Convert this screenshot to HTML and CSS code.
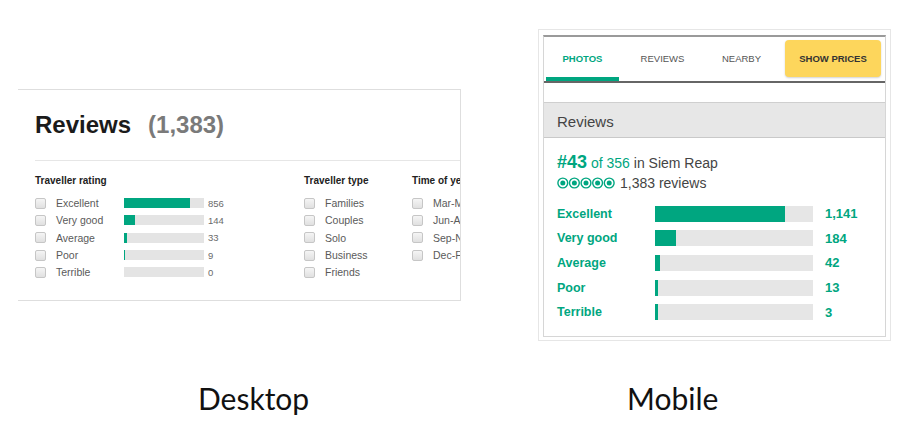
FILE: index.html
```html
<!DOCTYPE html>
<html lang="en">

<head>
    <meta charset="UTF-8" />
    <meta name="viewport" content="width=device-width, initial-scale=1.0" />
    <title>Reviews - Desktop vs Mobile</title>
    <link rel="stylesheet" href="styles.css">
</head>

<body>
    <div class="stage">
        <!-- Desktop reviews panel -->
        <section class="desk">
            <div class="desk-head">
                <h1 class="desk-title">Reviews</h1>
                <span class="desk-total">(1,383)</span>
            </div>
            <div class="desk-filters">
                <div class="filter filter-rating">
                    <h3 class="filter-title">Traveller rating</h3>
                    <ul class="filter-list">
                        <li class="filter-row"><span class="box"></span><span class="filter-label">Excellent</span><span class="d-bar"><span class="d-fill" style="width:82.1%"></span></span><span class="d-count">856</span></li>
                        <li class="filter-row"><span class="box"></span><span class="filter-label">Very good</span><span class="d-bar"><span class="d-fill" style="width:13.8%"></span></span><span class="d-count">144</span></li>
                        <li class="filter-row"><span class="box"></span><span class="filter-label">Average</span><span class="d-bar"><span class="d-fill" style="width:3.2%"></span></span><span class="d-count">33</span></li>
                        <li class="filter-row"><span class="box"></span><span class="filter-label">Poor</span><span class="d-bar"><span class="d-fill" style="width:0.4%"></span></span><span class="d-count">9</span></li>
                        <li class="filter-row"><span class="box"></span><span class="filter-label">Terrible</span><span class="d-bar"><span class="d-fill" style="width:0"></span></span><span class="d-count">0</span></li>
                    </ul>
                </div>
                <div class="filter filter-type">
                    <h3 class="filter-title">Traveller type</h3>
                    <ul class="filter-list">
                        <li class="filter-row"><span class="box"></span><span class="filter-label">Families</span></li>
                        <li class="filter-row"><span class="box"></span><span class="filter-label">Couples</span></li>
                        <li class="filter-row"><span class="box"></span><span class="filter-label">Solo</span></li>
                        <li class="filter-row"><span class="box"></span><span class="filter-label">Business</span></li>
                        <li class="filter-row"><span class="box"></span><span class="filter-label">Friends</span></li>
                    </ul>
                </div>
                <!-- this column runs past the panel edge and gets clipped -->
                <div class="filter filter-time">
                    <h3 class="filter-title">Time of year</h3>
                    <ul class="filter-list">
                        <li class="filter-row"><span class="box"></span><span class="filter-label">Mar-May</span></li>
                        <li class="filter-row"><span class="box"></span><span class="filter-label">Jun-Aug</span></li>
                        <li class="filter-row"><span class="box"></span><span class="filter-label">Sep-Nov</span></li>
                        <li class="filter-row"><span class="box"></span><span class="filter-label">Dec-Feb</span></li>
                    </ul>
                </div>
            </div>
        </section>

        <!-- Mobile reviews screen -->
        <section class="phone">
            <div class="phone-inner">
                <nav class="tabs">
                    <span class="tab tab-active">PHOTOS</span>
                    <span class="tab">REVIEWS</span>
                    <span class="tab">NEARBY</span>
                    <button class="prices-btn">SHOW PRICES</button>
                </nav>
                <div class="m-head">Reviews</div>
                <div class="m-body">
                    <div class="rank"><span class="rank-num">#43</span><span class="rank-of"> of 356</span> in Siem Reap</div>
                    <div class="bubbles-line">
                        <svg class="bubbles" width="58" height="12" viewBox="0 0 58 12">
                            <g fill="none" stroke="#00a680" stroke-width="1.4">
                                <circle cx="5.8" cy="6" r="4.9" />
                                <circle cx="17.4" cy="6" r="4.9" />
                                <circle cx="29" cy="6" r="4.9" />
                                <circle cx="40.6" cy="6" r="4.9" />
                                <circle cx="52.2" cy="6" r="4.9" />
                            </g>
                            <g fill="#00a680">
                                <circle cx="5.8" cy="6" r="2.5" />
                                <circle cx="17.4" cy="6" r="2.5" />
                                <circle cx="29" cy="6" r="2.5" />
                                <circle cx="40.6" cy="6" r="2.5" />
                                <circle cx="52.2" cy="6" r="2.5" />
                            </g>
                        </svg>
                        <span>1,383 reviews</span>
                    </div>
                    <ul class="m-rows">
                        <li class="m-row"><span class="m-label">Excellent</span><span class="m-bar"><span class="m-fill" style="width:82.5%"></span></span><span class="m-count">1,141</span></li>
                        <li class="m-row"><span class="m-label">Very good</span><span class="m-bar"><span class="m-fill" style="width:13.3%"></span></span><span class="m-count">184</span></li>
                        <li class="m-row"><span class="m-label">Average</span><span class="m-bar"><span class="m-fill" style="width:3%"></span></span><span class="m-count">42</span></li>
                        <li class="m-row"><span class="m-label">Poor</span><span class="m-bar"><span class="m-fill" style="width:0.9%"></span></span><span class="m-count">13</span></li>
                        <li class="m-row"><span class="m-label">Terrible</span><span class="m-bar"><span class="m-fill" style="width:0.2%"></span></span><span class="m-count">3</span></li>
                    </ul>
                </div>
            </div>
        </section>
    </div>

    <div class="captions">
        <span class="caption caption-desk">Desktop</span>
        <span class="caption">Mobile</span>
    </div>
</body>

</html>
```

FILE: styles.css
```css
body {
    margin: 0;
    width: 908px;
    height: 424px;
    overflow: hidden;
    background: #fff;
    font-family: 'Liberation Sans', Arial, sans-serif;
}

ul {
    list-style: none;
    margin: 0;
    padding: 0;
}

.stage {
    display: flex;
    align-items: flex-start;
    padding: 29px 0 0 18px;
    height: 312px;
}

/* Desktop panel */
.desk {
    margin-top: 60px;
    width: 443px;
    height: 212px;
    padding-top: 21px;
    box-sizing: border-box;
    border-top: 1px solid #dedede;
    border-right: 1px solid #dedede;
    border-bottom: 1px solid #dedede;
    overflow: hidden;
}

.desk-head {
    display: flex;
    align-items: baseline;
    margin-left: 17px;
    height: 28px;
    padding-bottom: 21px;
    border-bottom: 1px solid #e6e6e6;
}

.desk-title {
    margin: 0;
    font-size: 24px;
    line-height: 28px;
    font-weight: bold;
    color: #1b1b1b;
}

.desk-total {
    margin-left: 17px;
    font-size: 24px;
    line-height: 28px;
    font-weight: bold;
    color: #7a7a7a;
}

.desk-filters {
    display: flex;
    padding: 14px 0 0 17px;
    white-space: nowrap;
}

.filter-rating {
    width: 269px;
    flex-shrink: 0;
}

.filter-type {
    width: 108px;
    flex-shrink: 0;
}

.filter-time {
    flex-shrink: 0;
}

.filter-title {
    margin: 0 0 7.5px;
    font-size: 10px;
    line-height: 12px;
    font-weight: bold;
    color: #222;
}

.filter-row {
    display: flex;
    align-items: center;
    height: 17.3px;
}

.box {
    width: 9px;
    height: 9px;
    border: 1px solid #c6c6c6;
    border-radius: 2px;
    background: linear-gradient(#f5f5f5, #e0e0e0);
    margin-right: 10px;
    flex-shrink: 0;
}

.filter-label {
    width: 68px;
    font-size: 10.5px;
    color: #5a5a5a;
}

.d-bar {
    width: 80px;
    height: 10px;
    background: #e4e4e4;
    margin-right: 4px;
}

.d-fill {
    display: block;
    height: 100%;
    background: #00a680;
}

.d-count {
    font-size: 9.5px;
    color: #6a6a6a;
}

/* Mobile screen */
.phone {
    margin-left: 77px;
    width: 353px;
    height: 312px;
    box-sizing: border-box;
    border: 1px solid #e6e6e6;
    padding: 5px 4px 3px 4px;
}

.phone-inner {
    height: 302px;
    box-sizing: border-box;
    border-top: 2px solid #9a9a9a;
    border-left: 1px solid #d6d6d6;
    border-right: 1px solid #d6d6d6;
    border-bottom: 1px solid #d6d6d6;
}

.tabs {
    display: flex;
    align-items: flex-start;
    height: 44px;
    border-bottom: 2px solid #666;
}

.tab {
    width: 79px;
    height: 44px;
    box-sizing: border-box;
    text-align: center;
    line-height: 44px;
    font-size: 9.5px;
    color: #555;
}

.tab-active {
    width: 73px;
    margin: 0 4px 0 2px;
    color: #00a680;
    font-weight: bold;
    border-bottom: 4px solid #00a680;
}

.prices-btn {
    margin: 3px 0 0 4px;
    width: 96px;
    height: 37px;
    border: none;
    border-radius: 4px;
    background: #fdd65c;
    box-shadow: 0 1px 2px rgba(0, 0, 0, 0.18);
    font-family: inherit;
    font-size: 9.5px;
    font-weight: bold;
    color: #333;
    padding: 0;
}

.m-head {
    margin-top: 19px;
    height: 36px;
    box-sizing: border-box;
    padding: 3px 0 0 13px;
    line-height: 31px;
    background: #e7e7e7;
    border-top: 1px solid #cfcfcf;
    border-bottom: 1px solid #c9c9c9;
    font-size: 15px;
    color: #444;
}

.m-body {
    padding: 14px 0 0 13px;
}

.rank {
    font-size: 14px;
    line-height: 20px;
    color: #444;
}

.rank-num {
    font-size: 18px;
    font-weight: bold;
    color: #00a680;
}

.rank-of {
    color: #00a680;
}

.bubbles-line {
    display: flex;
    align-items: center;
    gap: 5px;
    height: 20px;
    font-size: 14px;
    color: #444;
}

.m-rows {
    margin-top: 8.5px;
}

.m-row {
    display: flex;
    align-items: center;
    height: 24.6px;
}

.m-label {
    width: 98px;
    font-size: 12.5px;
    font-weight: bold;
    color: #00a680;
}

.m-bar {
    width: 158px;
    height: 16px;
    background: #e6e6e6;
    margin-right: 12px;
}

.m-fill {
    display: block;
    height: 100%;
    min-width: 3px;
    background: #00a680;
}

.m-count {
    font-size: 13px;
    font-weight: bold;
    color: #00a680;
}

/* Captions under the two panels */
.captions {
    display: flex;
    margin-top: 39px;
    padding-left: 198px;
    font-family: Lato, 'Open Sans', sans-serif;
    font-size: 30px;
    line-height: 36px;
    color: #111;
}

.caption-desk {
    width: 429px;
}
```
